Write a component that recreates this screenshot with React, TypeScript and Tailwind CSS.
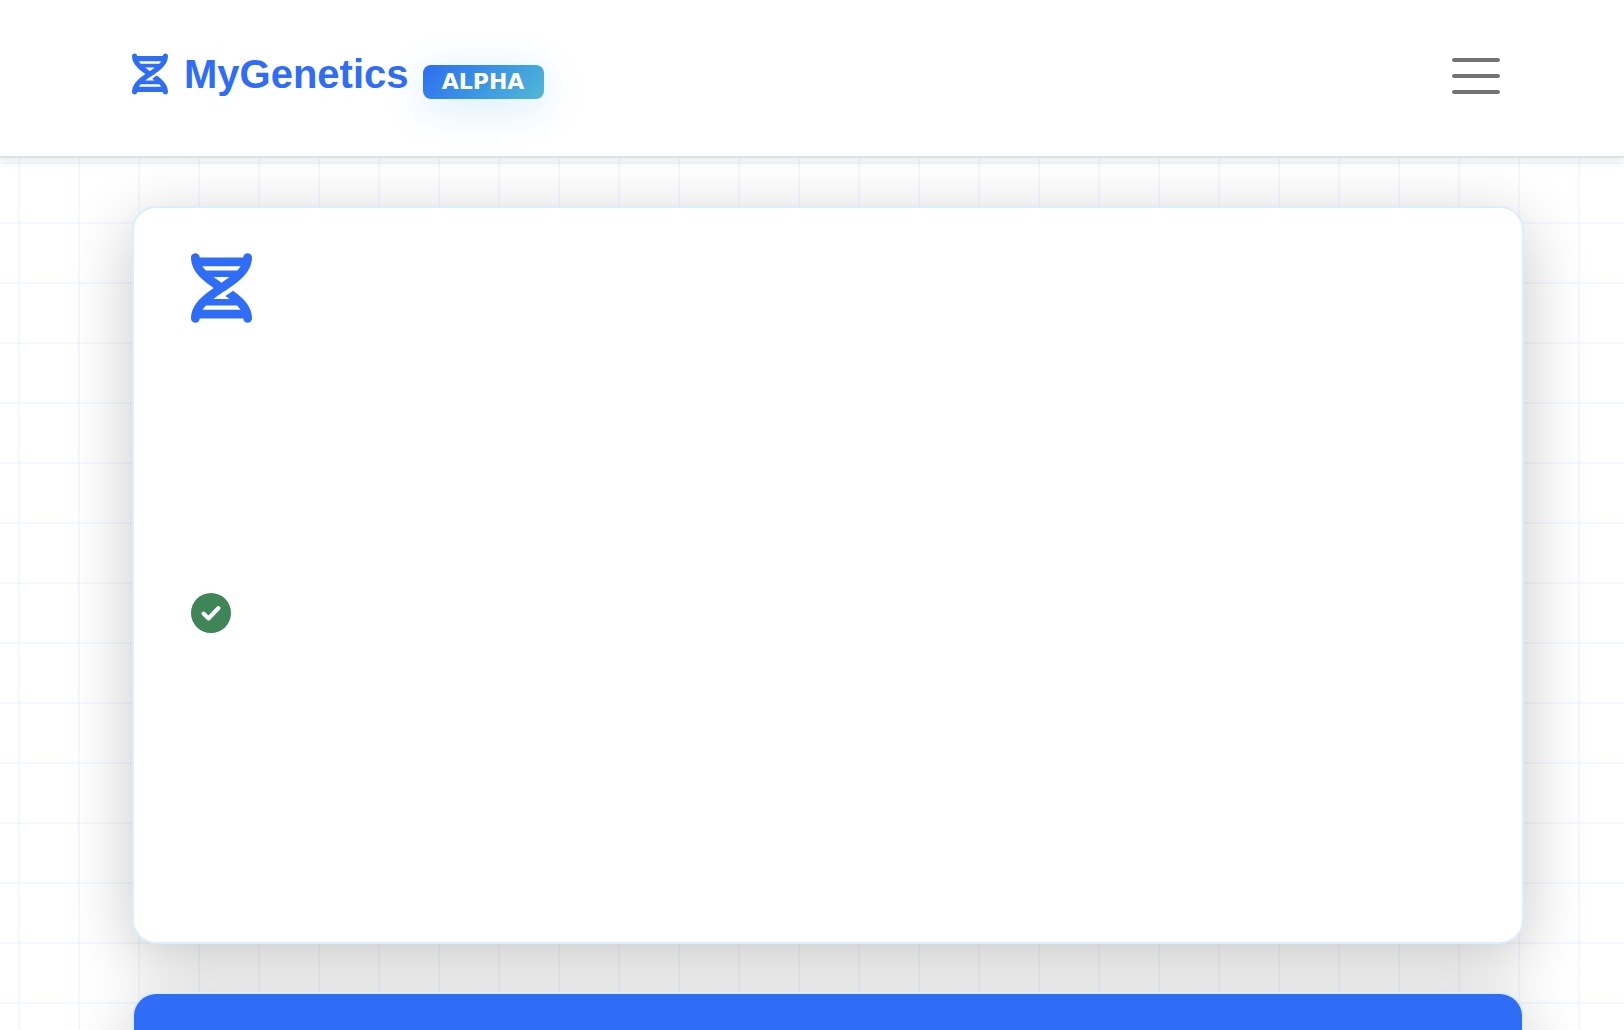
import { FaDna } from "react-icons/fa6";

const cardShadow = "shadow-[0_16px_64px_rgba(0,0,0,0.22)]";

function Header() {
  return (
    <header className="relative z-10 h-[158px] border-b-2 border-[#dee2e6] bg-white shadow-[0_4px_8px_rgba(0,0,0,0.075)]">
      <div className="flex items-start justify-between pt-11 pr-[124px] pl-[132px]">
        <a href="#home" className="flex items-center text-[#306df6]">
          <FaDna className="mr-4 h-[42px] w-9" aria-hidden="true" />
          <span className="font-['Liberation_Sans',Arial,sans-serif] text-[40px] leading-[60px] font-bold">
            MyGenetics
          </span>
          <span className="mt-4 ml-3.5 flex h-[34px] w-[121px] items-center justify-center rounded-lg bg-linear-135 from-[#2f6cf0] to-[#52b8d3] font-['DejaVu_Sans',Verdana,sans-serif] text-[22px] leading-none font-bold text-white shadow-[0_8px_40px_rgba(14,150,240,0.18)]">
            ALPHA
          </span>
        </a>
        <button type="button" aria-label="Toggle navigation" className="mt-3.5 flex w-12 flex-col gap-3">
          <span className="h-1 rounded-full bg-[#737373]" />
          <span className="h-1 rounded-full bg-[#737373]" />
          <span className="h-1 rounded-full bg-[#737373]" />
        </button>
      </div>
    </header>
  );
}

function CheckBadge() {
  return (
    <svg viewBox="0 0 40 40" className="size-10" role="img" aria-label="Done">
      <circle cx="20" cy="20" r="20" fill="#3f8557" />
      <path
        d="M12.5 20.5l5 5L27.5 15"
        fill="none"
        stroke="#fff"
        strokeWidth="4"
        strokeLinecap="round"
        strokeLinejoin="round"
      />
    </svg>
  );
}

export default function App() {
  return (
    <div className="h-screen overflow-hidden bg-white bg-[linear-gradient(to_right,rgba(14,130,240,0.05)_2px,transparent_2px),linear-gradient(to_bottom,rgba(14,130,240,0.05)_2px,transparent_2px)] bg-size-[60px_60px] bg-position-[18px_42px]">
      <Header />
      <main className="flex flex-col gap-12 pt-12 pr-[100px] pl-[132px]">
        <section className={`h-[738px] rounded-3xl border-2 border-[#daeefc] bg-white pt-11 pl-[57px] ${cardShadow}`}>
          <FaDna className="h-[72px] w-[61px] text-[#306df6]" aria-hidden="true" />
          <div className="pt-[269px]">
            <CheckBadge />
          </div>
        </section>
        <section className={`h-60 overflow-hidden rounded-3xl border-2 border-[#daeefc] bg-white ${cardShadow}`}>
          <div className="h-32 bg-[#306df6]" />
        </section>
      </main>
    </div>
  );
}
